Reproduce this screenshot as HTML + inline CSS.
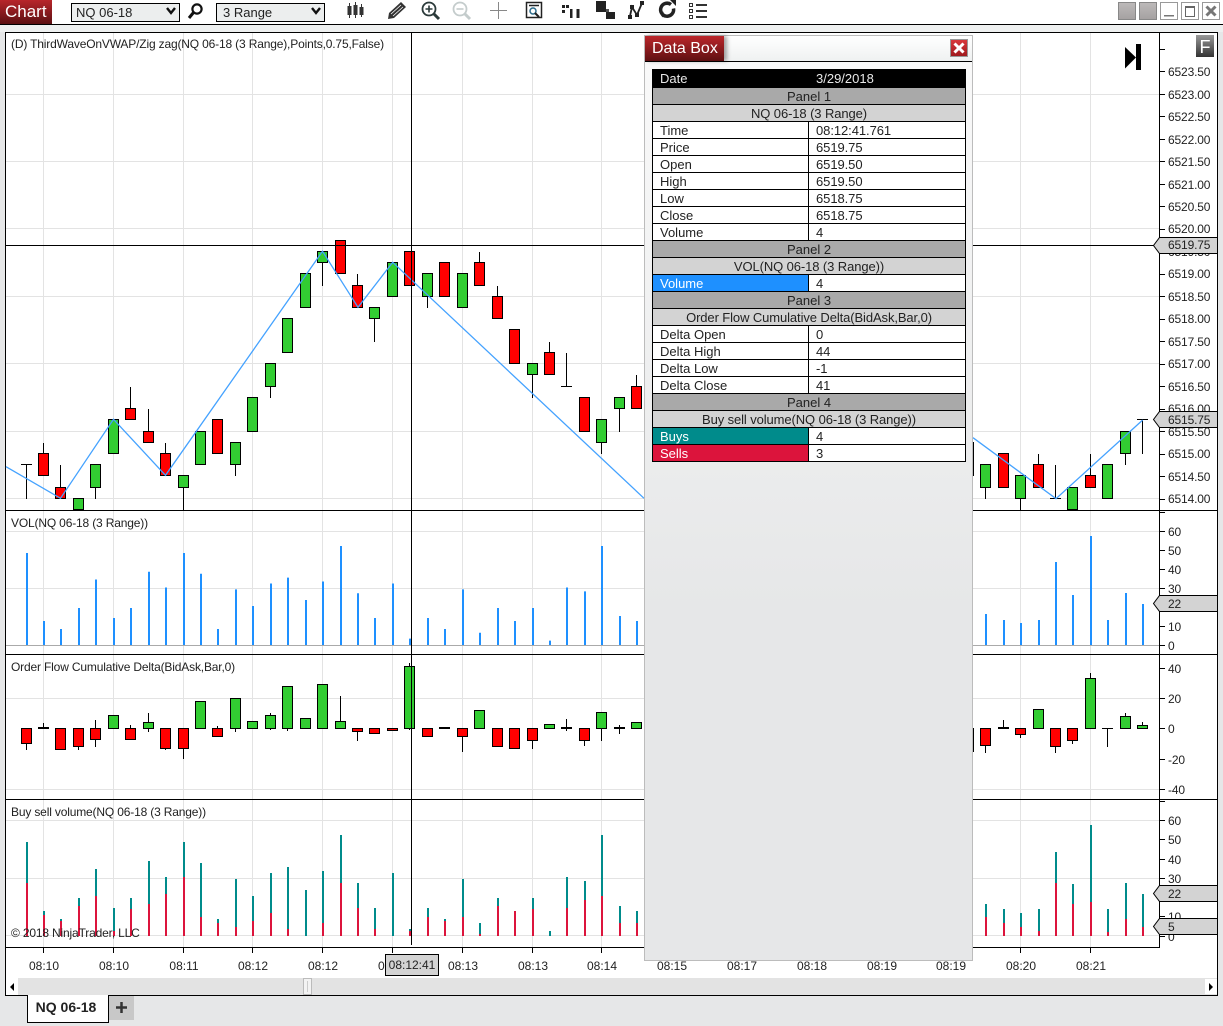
<!DOCTYPE html>
<html><head><meta charset="utf-8"><title>Chart</title>
<style>
html,body{margin:0;padding:0;background:#e6e7e8;}
body{position:relative;width:1223px;height:1026px;overflow:hidden;font-family:"Liberation Sans",sans-serif;color:#222;}
#top{position:absolute;left:0;top:0;width:1223px;height:24px;background:#fff;border-bottom:1px solid #000;}
#band{position:absolute;left:0;top:25px;width:1223px;height:7px;background:#eef0f0;}
#charttab{position:absolute;left:0;top:0;width:52px;height:24px;background:linear-gradient(#b8262b,#5c1012);color:#fff;font-size:17px;line-height:24px;text-indent:5px;}
.sel{position:absolute;top:3px;height:17px;box-sizing:content-box;background:#eceeee;border:1px solid #000;font-size:13px;line-height:18px;text-indent:4px;}
svg{position:absolute;left:0;top:0;}
.l{letter-spacing:-.165px;}
.ax text{letter-spacing:-.15px;}
#box{position:absolute;left:644px;top:35px;width:329px;height:926px;box-sizing:border-box;border:1px solid #bcbcbc;background:linear-gradient(#fafafa 0,#e6e7e8 62%);}
#bt{position:absolute;left:0;top:0;width:327px;height:25px;border-bottom:1px solid #000;background:linear-gradient(#fff,#eff1f1);}
#btab{position:absolute;left:0;top:0;width:79px;height:25px;background:linear-gradient(#bb262b,#5e1012);box-shadow:3px 0 4px rgba(0,0,0,.35);color:#fff;font-size:16px;line-height:26px;text-indent:7px;}
#bx{position:absolute;left:305px;top:3px;width:16px;height:16px;border:1px solid #999;background:linear-gradient(#d8383c,#a01a1e);}
#tbl{position:absolute;left:7px;top:33px;width:314px;height:393px;box-sizing:border-box;border:1px solid #000;border-top:0;background:#000;font-size:13px;}
.r{position:absolute;left:0;width:312px;height:16px;line-height:17px;}
.p{background:#a9a9a9;text-align:center;}
.n{background:#d3d3d3;text-align:center;letter-spacing:-.1px;}
.a,.b{position:absolute;top:0;height:16px;}
.a{left:0;width:155px;background:#fff;text-indent:7px;}
.b{left:156px;width:156px;background:#fff;text-indent:7px;letter-spacing:-.07px;}
</style></head><body>
<div id="top"></div><div id="band"></div>
<div id="charttab">Chart</div>
<div class="sel" style="left:71px;width:107px;">NQ 06-18</div>
<div class="sel" style="left:216px;width:107px;text-indent:6px;">3 Range</div>

<svg width="1223" height="1026" viewBox="0 0 1223 1026" font-family="Liberation Sans, sans-serif" font-size="12" fill="#222">
<defs>
<linearGradient id="g1" x1="0" y1="0" x2="0" y2="1"><stop offset="0" stop-color="#bdbaba"/><stop offset="1" stop-color="#a5a1a1"/></linearGradient>
<linearGradient id="g2" x1="0" y1="0" x2="0" y2="1"><stop offset="0" stop-color="#999"/><stop offset="1" stop-color="#333"/></linearGradient>
</defs>

<!-- toolbar icons -->
<g fill="none" stroke="#111">
<path d="M175 9l-4 5-4-5M320 9l-4 5-4-5" transform="translate(0 -1)" stroke-width="2.4"/>
<circle cx="197" cy="9" r="4.600" stroke-width="2.200"/><path d="M193.500 12.500L189 18" stroke-width="3"/>
<path d="M349.500 3v15M355.500 2v16M361.500 4v13" stroke="#333" stroke-width="1"/>
</g>
<path d="M347.500 6h4v9h-4zM353.500 5h4v10h-4zM359.500 7h4v8h-4z" fill="#333"/>
<path d="M388 19l1-6L401 2l5 5-12 11z" fill="#333"/><path d="M391 14l10-9M393 16l10-9" stroke="#fff" fill="none" stroke-width=".8"/>
<g fill="none" stroke="#2b3a3a">
<circle cx="429" cy="9" r="6.500" stroke-width="1.800"/><path d="M434 14l5 5" stroke-width="3"/><path d="M429 5.500v7M425.500 9h7" stroke-width="1.600"/>
</g>
<g fill="none" stroke="#c4cccc">
<circle cx="460" cy="9" r="6.500" stroke-width="1.800"/><path d="M465 14l5 5" stroke-width="3"/><path d="M456.500 9h7" stroke-width="1.600"/>
</g>
<path d="M498.500 2v17M490 10.500h17" stroke="#888" fill="none"/>
<g fill="none" stroke="#222">
<path d="M526.500 2.500h15v15h-15z" stroke-width="1.500"/><path d="M529 5.500h10" stroke-width="1.500"/>
<circle cx="533" cy="11" r="3" stroke-width="1.500" stroke="#2a6a8a"/><path d="M535 13l4 4" stroke-width="2"/>
</g>
<path d="M562 5h3v3h-3zM566 5h3v3h-3zM562 10h3v3h-3zM570 9h2.500v9H570zM576.500 9h3v9h-3z" fill="#222"/>
<path d="M596 1h10v11h-10z" fill="#222"/><path d="M606 9h3v3h-3z" fill="#555"/><path d="M606 12h9v7h-9z" fill="#222"/>
<path d="M630 16L632 7l5 8 5-12" fill="none" stroke="#222" stroke-width="1.800"/>
<path d="M628 15h4v4h-4zM630 5h4v4h-4zM635 13h4v4h-4zM640 1h4v4h-4z" fill="#222"/>
<path d="M671 4.500a6.500 6.500 0 1 0 2.500 4M664 16a6.500 6.500 0 0 1-2.500-4" fill="none" stroke="#222" stroke-width="3.500"/><path d="M670 0h6v6z" fill="#222"/>
<path d="M689.500 3.500h3v3h-3zM689.500 9.500h3v3h-3zM689.500 15.500h3v3h-3z" fill="none" stroke="#333"/><path d="M696 4h11v2h-11zM696 10h11v2h-11zM696 16h11v2h-11z" fill="#333"/>
<rect x="1118.500" y="2.500" width="17" height="17" fill="url(#g1)" stroke="#888"/>
<rect x="1139.500" y="2.500" width="17" height="17" fill="url(#g1)" stroke="#888"/>
<rect x="1160.500" y="2.500" width="17" height="17" fill="#fff" stroke="#999"/><path d="M1164 15h10v1.500h-10z" fill="#777"/>
<rect x="1181.500" y="2.500" width="17" height="17" fill="#fff" stroke="#999"/><path d="M1185.500 6.500h9v10h-9z" fill="none" stroke="#666"/><path d="M1185 6h10v2h-10z" fill="#666"/>
<rect x="1202.500" y="2.500" width="17" height="17" fill="#fff" stroke="#999"/><path d="M1206.500 6.500l9 9M1215.500 6.500l-9 9" stroke="#777" stroke-width="3" fill="none"/>

<!-- chart frame -->
<rect x="5.500" y="32.500" width="1212" height="963" fill="#fff" stroke="#000"/>

<!-- grid -->
<path d="M43.500 33V947M113.500 33V947M183.500 33V947M252.500 33V947M322.500 33V947M392.500 33V947M462.500 33V947M532.500 33V947M601.500 33V947M1020.500 33V947M1090.500 33V947M6 94.500H1159M6 161.500H1159M6 228.500H1159M6 296.500H1159M6 363.500H1159M6 431.500H1159M6 498.500H1159M6 531.500H1159M6 588.500H1159M6 698.500H1159M6 789.500H1159M6 820.500H1159M6 878.500H1159M6 935.500H1159" stroke="#e3e3e3" fill="none"/>
<path d="M6 645.500H1159" stroke="#aaa" fill="none"/>

<!-- top panel wicks -->
<path d="M26.500 464V499M21 464.500H32M43.500 443V453M60.500 465V487M95.500 487V499M130.500 387V408M148.500 409V431M165.500 443V453M183.500 487V510M235.500 464V476M270.500 386V398M322.500 262V286M357.500 274V285M374.500 318V342M427.500 296V308M479.500 252V262M497.500 286V296M532.500 374V398M549.500 342V352M566.500 353V386M561 386.500H572M601.500 442V454M619.500 408V432M636.500 375V386M973.500 442V476M985.500 487V499M1020.500 498V510M1038.500 454V464M1055.500 465V499M1050 498.500H1061M1090.500 454V475M1125.500 453V465M1142.500 420V454M1137 419.500H1148" stroke="#000" fill="none"/>
<path d="M38.500 453.500h10v22h-10zM55.500 487.500h10v11h-10zM125.500 408.500h10v11h-10zM143.500 431.500h10v11h-10zM160.500 453.500h10v22h-10zM212.500 419.500h10v34h-10zM335.500 240.500h10v33h-10zM352.500 285.500h10v22h-10zM404.500 251.500h10v34h-10zM439.500 262.500h10v34h-10zM474.500 262.500h10v23h-10zM492.500 296.500h10v22h-10zM509.500 329.500h10v34h-10zM544.500 352.500h10v22h-10zM579.500 397.500h10v34h-10zM631.500 386.500h10v22h-10zM998.500 453.500h10v34h-10zM1033.500 464.500h10v23h-10zM1085.500 475.500h10v12h-10z" fill="#f00" stroke="#000"/>
<path d="M73.500 498.500h10v11h-10zM90.500 464.500h10v23h-10zM108.500 419.500h10v34h-10zM178.500 475.500h10v12h-10zM195.500 431.500h10v33h-10zM230.500 442.500h10v22h-10zM247.500 397.500h10v34h-10zM265.500 363.500h10v23h-10zM282.500 318.500h10v34h-10zM300.500 273.500h10v34h-10zM317.500 251.500h10v11h-10zM369.500 307.500h10v11h-10zM387.500 262.500h10v34h-10zM422.500 273.500h10v23h-10zM457.500 273.500h10v34h-10zM527.500 363.500h10v11h-10zM596.500 419.500h10v23h-10zM614.500 397.500h10v11h-10zM980.500 464.500h10v23h-10zM1015.500 475.500h10v23h-10zM1067.500 487.500h10v22h-10zM1102.500 464.500h10v34h-10zM1120.500 431.500h10v22h-10z" fill="#32cd32" stroke="#000"/>
<path d="M6 466.700L60.500 498.300L113.500 419.300L165.500 475.300L322.500 251.300L358 307.300L392.700 262.300L644 498.300M973 437.700L1056 498.700L1142.700 420" fill="none" stroke="#44a2ff" stroke-width="1.300"/>

<!-- volume panel -->
<path d="M27 553V645M44 621V645M61 629V645M79 608V645M96 579.500V645M114 618V645M131 608V645M149 571.700V645M166 587.500V645M184 553V645M201 573.700V645M218 629V645M236 589.400V645M253 606V645M271 583.500V645M288 577.600V645M306 600V645M323 581.500V645M341 546V645M358 593.300V645M375 618V645M393 583.500V645M410 638.600V645M428 618V645M445 629V645M463 589.400V645M480 632.700V645M498 608V645M515 621V645M533 608V645M550 640.600V645M567 587.500V645M585 591.400V645M602 546V645M620 616V645M637 621V645M986 614V645M1004 620V645M1021 623V645M1039 620V645M1056 562V645M1073 595V645M1091 536V645M1108 620V645M1126 593V645M1143 604V645" stroke="#1e90ff" stroke-width="2" fill="none"/>

<!-- delta panel -->
<path d="M26.500 743V750M43.500 723V728M78.500 746V750M95.500 720V747M130.500 725V728M148.500 713V732M165.500 748V750M183.500 748V759M217.500 726V728M235.500 728V732M270.500 713V730M287.500 728V731M340.500 696V722M357.500 731V741M409.500 663V730M462.500 736V752M532.500 740V749M566.500 719V731M584.500 740V746M601.500 728V741M619.500 725V734M973.500 728V752M985.500 745V753M1003.500 720V728M1020.500 734V738M1055.500 746V753M1072.500 740V744M1090.500 673V679M1107.500 728V747M1102 728.500H1113M1125.500 713V717M1142.500 722V726" stroke="#000" fill="none"/>
<path d="M38 727h11v2H38zM439 727h11v2h-11zM561 727h11v2h-11zM614 727h11v2h-11zM998 727h11v2h-11z" fill="#000"/>
<path d="M21.500 728.500h10v15h-10zM55.500 728.500h10v21h-10zM73.500 728.500h10v18h-10zM90.500 728.500h10v11h-10zM125.500 728.500h10v11h-10zM160.500 728.500h10v20h-10zM178.500 728.500h10v20h-10zM212.500 728.500h10v8h-10zM352.500 728.500h10v3h-10zM369.500 728.500h10v5h-10zM387.500 728.500h10v2h-10zM422.500 728.500h10v8h-10zM457.500 728.500h10v8h-10zM492.500 728.500h10v18h-10zM509.500 728.500h10v20h-10zM527.500 728.500h10v12h-10zM579.500 728.500h10v12h-10zM980.500 728.500h10v17h-10zM1015.500 728.500h10v6h-10zM1050.500 728.500h10v18h-10zM1067.500 728.500h10v12h-10z" fill="#f00" stroke="#000"/>
<path d="M108.500 715.500h10v13h-10zM143.500 722.500h10v6h-10zM195.500 701.500h10v27h-10zM230.500 698.500h10v30h-10zM247.500 721.500h10v7h-10zM265.500 715.500h10v13h-10zM282.500 686.500h10v42h-10zM300.500 718.500h10v10h-10zM317.500 684.500h10v44h-10zM335.500 721.500h10v7h-10zM404.500 666.500h10v62h-10zM474.500 710.500h10v18h-10zM544.500 724.500h10v4h-10zM596.500 712.500h10v16h-10zM631.500 722.500h10v6h-10zM1033.500 709.500h10v19h-10zM1085.500 678.500h10v50h-10zM1120.500 716.500h10v12h-10zM1137.500 725.500h10v3h-10z" fill="#32cd32" stroke="#000"/>

<!-- buy sell panel -->
<path d="M27 842V936M44 911V936M61 919V936M79 898V936M96 869V936M114 908V936M131 898V936M149 861V936M166 877V936M184 842V936M201 863V936M218 919V936M236 879V936M253 896V936M271 873V936M288 867V936M306 890V936M323 871V936M341 835V936M358 883V936M375 908V936M393 873V936M410 929V936M428 908V936M445 919V936M463 879V936M480 923V936M498 898V936M533 898V936M550 931V936M567 877V936M585 881V936M602 835V936M620 906V936M637 911V936M986 904V936M1004 909V936M1021 913V936M1039 909V936M1056 852V936M1073 884V936M1091 825V936M1108 909V936M1126 883V936M1143 894V936" stroke="#008b8b" stroke-width="2" fill="none"/>
<path d="M27 883V936M44 915V936M61 921V936M79 906V936M96 896V936M114 931V936M131 909V936M149 904V936M166 894V936M184 877V936M201 917V936M218 923V936M236 927V936M253 921V936M271 913V936M288 929V936M323 923V936M341 883V936M358 908V936M375 929V936M410 931V936M428 917V936M445 921V936M463 917V936M480 934V936M498 906V936M515 911V936M533 909V936M567 908V936M585 900V936M602 896V936M620 923V936M637 923V936M986 917V936M1004 923V936M1021 927V936M1039 931V936M1056 883V936M1073 904V936M1091 902V936M1108 932V936M1126 919V936M1143 927V936" stroke="#dc143c" stroke-width="2" fill="none"/>

<!-- separators, axes -->
<path d="M6 510.500H1217M6 654.500H1217M6 799.500H1217M6 947.500H1160M1159.500 33V948M411.500 33V945M6 245.500H1160" stroke="#000" fill="none"/>
<path d="M1160 49.500h5M1160 71.500h5M1160 94.500h5M1160 116.500h5M1160 139.500h5M1160 161.500h5M1160 184.500h5M1160 206.500h5M1160 229.500h5M1160 274.500h5M1160 296.500h5M1160 319.500h5M1160 341.500h5M1160 364.500h5M1160 386.500h5M1160 409.500h5M1160 431.500h5M1160 454.500h5M1160 476.500h5M1160 499.500h5M1160 512.500h5M1160 531.500h5M1160 550.500h5M1160 569.500h5M1160 588.500h5M1160 626.500h5M1160 645.500h5M1160 668.500h5M1160 698.500h5M1160 728.500h5M1160 759.500h5M1160 789.500h5M1160 801.500h5M1160 820.500h5M1160 839.500h5M1160 859.500h5M1160 878.500h5M1160 916.500h5M1160 936.500h5M43.500 948v5M113.500 948v5M183.500 948v5M252.500 948v5M322.500 948v5M392.500 948v5M462.500 948v5M532.500 948v5M601.500 948v5M1020.500 948v5M1090.500 948v5" stroke="#000" fill="none"/>

<!-- panel labels -->
<text class="l" x="11" y="48">(D) ThirdWaveOnVWAP/Zig zag(NQ 06-18 (3 Range),Points,0.75,False)</text>
<text class="l" x="11" y="527">VOL(NQ 06-18 (3 Range))</text>
<text class="l" x="11" y="671">Order Flow Cumulative Delta(BidAsk,Bar,0)</text>
<text class="l" x="11" y="816">Buy sell volume(NQ 06-18 (3 Range))</text>
<text class="l" x="11" y="937">© 2018 NinjaTrader, LLC</text>

<!-- axis labels -->
<g class="ax">
<text x="1168" y="76">6523.50</text><text x="1168" y="99">6523.00</text><text x="1168" y="121">6522.50</text><text x="1168" y="144">6522.00</text><text x="1168" y="166">6521.50</text><text x="1168" y="189">6521.00</text><text x="1168" y="211">6520.50</text><text x="1168" y="233">6520.00</text><text x="1168" y="256">6519.50</text><text x="1168" y="278">6519.00</text><text x="1168" y="301">6518.50</text><text x="1168" y="323">6518.00</text><text x="1168" y="346">6517.50</text><text x="1168" y="368">6517.00</text><text x="1168" y="391">6516.50</text><text x="1168" y="413">6516.00</text><text x="1168" y="436">6515.50</text><text x="1168" y="458">6515.00</text><text x="1168" y="481">6514.50</text><text x="1168" y="503">6514.00</text>
<text x="1168" y="536">60</text><text x="1168" y="555">50</text><text x="1168" y="574">40</text><text x="1168" y="593">30</text><text x="1168" y="631">10</text><text x="1168" y="650">0</text>
<text x="1168" y="673">40</text><text x="1168" y="703">20</text><text x="1168" y="733">0</text><text x="1168" y="764">-20</text><text x="1168" y="794">-40</text>
<text x="1168" y="825">60</text><text x="1168" y="844">50</text><text x="1168" y="864">40</text><text x="1168" y="883">30</text><text x="1168" y="921">10</text><text x="1168" y="941">0</text>
</g>

<!-- price markers -->
<g fill="#d3d3d3" stroke="#000">
<path d="M1217 237.500H1159.500L1153.500 245.500L1159.500 253.500H1217"/>
<path d="M1217 411.500H1159.500L1153.500 419.500L1159.500 427.500H1217"/>
<path d="M1217 595.500H1159.500L1153.500 603.500L1159.500 611.500H1217"/>
<path d="M1217 885.500H1159.500L1153.500 893.500L1159.500 901.500H1217"/>
<path d="M1217 918.500H1159.500L1153.500 926.500L1159.500 934.500H1217"/>
</g>
<g class="ax"><text x="1168" y="249">6519.75</text><text x="1168" y="424">6515.75</text><text x="1168" y="608">22</text><text x="1168" y="898">22</text><text x="1168" y="931">5</text></g>

<!-- time axis -->
<g text-anchor="middle">
<text x="44" y="970">08:10</text><text x="114" y="970">08:10</text><text x="184" y="970">08:11</text><text x="253" y="970">08:12</text><text x="323" y="970">08:12</text><text x="393" y="970">08:12</text><text x="463" y="970">08:13</text><text x="533" y="970">08:13</text><text x="602" y="970">08:14</text><text x="672" y="970">08:15</text><text x="742" y="970">08:17</text><text x="812" y="970">08:18</text><text x="882" y="970">08:19</text><text x="951" y="970">08:19</text><text x="1021" y="970">08:20</text><text x="1091" y="970">08:21</text>
</g>
<rect x="385.500" y="954.500" width="53" height="21" fill="#d3d3d3" stroke="#000"/>
<text x="412" y="969" text-anchor="middle">08:12:41</text>

<!-- scrollbar -->
<rect x="6" y="978" width="1211" height="17" fill="#e3e3e3"/>
<rect x="6" y="978" width="12" height="17" fill="#fff"/>
<path d="M14 983v8l-4-4z" fill="#000"/>
<rect x="1205" y="979" width="12" height="15" fill="#fff"/>
<path d="M1209 983v8l4-4z" fill="#000"/>
<rect x="303.500" y="978.500" width="8" height="16" fill="#f3f3f3" stroke="#bbb"/>
<path d="M307.500 981v11" stroke="#ccc"/>
<path d="M5 995.500H1218" stroke="#000"/>

<!-- end button + F -->
<path d="M1125 47l11 10.500-11 11z" fill="#000"/><rect x="1136" y="44" width="5" height="26" fill="#000"/>
<rect x="1196" y="35" width="18" height="22" fill="url(#g2)"/>
<text x="1205" y="53" fill="#fff" font-size="18" text-anchor="middle">F</text>

<!-- tabs -->
<path d="M27.500 995V1022.500H108.500V995" fill="#fff" stroke="#000"/>
<rect x="28" y="995" width="80" height="2" fill="#fff"/>
<text x="66" y="1012" text-anchor="middle" font-size="14" font-weight="bold" fill="#222">NQ 06-18</text>
<rect x="109" y="996" width="25" height="24" fill="#c8c8c8"/>
<path d="M116 1007.500h11M121.500 1002v11" stroke="#333" stroke-width="2.500"/>
</svg>

<div id="box">
  <div id="bt"><div id="btab">Data Box</div>
    <div id="bx"><svg width="16" height="16" viewBox="0 0 16 16"><path d="M3.500 3.500l9 9M12.500 3.500l-9 9" stroke="#fff" stroke-width="3" fill="none"/></svg></div>
  </div>
  <div id="tbl">
    <div class="r" style="top:0;height:18px;background:#000;color:#e8e8e8;line-height:19px;"><span style="position:absolute;left:7px;">Date</span><span style="position:absolute;left:163px;">3/29/2018</span></div>
    <div class="r p" style="top:19px;">Panel 1</div>
    <div class="r n" style="top:36px;">NQ 06-18 (3 Range)</div>
    <div class="r" style="top:53px;"><div class="a">Time</div><div class="b">08:12:41.761</div></div>
    <div class="r" style="top:70px;"><div class="a">Price</div><div class="b">6519.75</div></div>
    <div class="r" style="top:87px;"><div class="a">Open</div><div class="b">6519.50</div></div>
    <div class="r" style="top:104px;"><div class="a">High</div><div class="b">6519.50</div></div>
    <div class="r" style="top:121px;"><div class="a">Low</div><div class="b">6518.75</div></div>
    <div class="r" style="top:138px;"><div class="a">Close</div><div class="b">6518.75</div></div>
    <div class="r" style="top:155px;"><div class="a">Volume</div><div class="b">4</div></div>
    <div class="r p" style="top:172px;">Panel 2</div>
    <div class="r n" style="top:189px;">VOL(NQ 06-18 (3 Range))</div>
    <div class="r" style="top:206px;"><div class="a" style="background:#1e90ff;color:#fff;">Volume</div><div class="b">4</div></div>
    <div class="r p" style="top:223px;">Panel 3</div>
    <div class="r n" style="top:240px;">Order Flow Cumulative Delta(BidAsk,Bar,0)</div>
    <div class="r" style="top:257px;"><div class="a">Delta Open</div><div class="b">0</div></div>
    <div class="r" style="top:274px;"><div class="a">Delta High</div><div class="b">44</div></div>
    <div class="r" style="top:291px;"><div class="a">Delta Low</div><div class="b">-1</div></div>
    <div class="r" style="top:308px;"><div class="a">Delta Close</div><div class="b">41</div></div>
    <div class="r p" style="top:325px;">Panel 4</div>
    <div class="r n" style="top:342px;">Buy sell volume(NQ 06-18 (3 Range))</div>
    <div class="r" style="top:359px;"><div class="a" style="background:#008b8b;color:#fff;">Buys</div><div class="b">4</div></div>
    <div class="r" style="top:376px;"><div class="a" style="background:#dc143c;color:#fff;">Sells</div><div class="b">3</div></div>
  </div>
</div>
</body></html>
